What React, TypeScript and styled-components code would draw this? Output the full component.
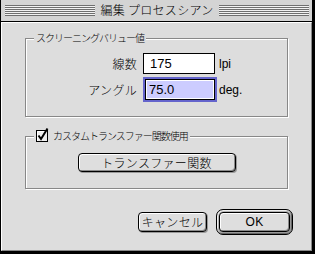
import React from "react";
import styled, { createGlobalStyle } from "styled-components";

const GlobalStyle = createGlobalStyle`
  html, body {
    margin: 0;
    padding: 0;
    background: #000;
  }
  body {
    font-family: "Noto Sans CJK JP", "Noto Sans", sans-serif;
    font-weight: 300;
    color: #000;
  }
`;

const Window = styled.div`
  width: 315px;
  height: 254px;
  box-sizing: border-box;
  display: flex;
  flex-direction: column;
  background: #dddddd;
  border-left: 1px solid #000;
  border-right: 3px solid #000;
  border-bottom: 3px solid #000;
`;

const TitleBar = styled.div`
  height: 22px;
  box-sizing: border-box;
  display: flex;
  align-items: center;
  padding: 0 3px 1px 4px;
  background: #d4d4d4;
  border-bottom: 1px solid #000;
`;

const Stripes = styled.div`
  flex: 1;
  height: 11px;
  background: repeating-linear-gradient(
    to bottom,
    #6f6f6f 0 1px,
    #f2f2f2 1px 2px
  );
`;

const Title = styled.div`
  padding: 0 5px;
  font-size: 12px;
  line-height: 14px;
  letter-spacing: 0.3px;
  white-space: nowrap;
`;

const Content = styled.div`
  flex: 1;
  display: flex;
  flex-direction: column;
  padding: 15px 23px 0 23px;
  border-top: 1px solid #fff;
  border-left: 1px solid #fff;
  border-right: 1px solid #888;
  border-bottom: 1px solid #888;
`;

const Group = styled.div<{ $top: number; $pad: number }>`
  position: relative;
  margin-top: ${(p) => p.$top}px;
  padding: ${(p) => p.$pad}px 0;
  border: 1px solid #888;
  box-shadow: inset 1px 1px 0 #fff, 1px 1px 0 #fff;
`;

const Legend = styled.div`
  position: absolute;
  top: -8px;
  left: 8px;
  display: flex;
  align-items: center;
  height: 14px;
  padding: 0 2px;
  background: #dddddd;
  font-size: 10px;
  letter-spacing: -1px;
  line-height: 14px;
  white-space: nowrap;
`;

const Rows = styled.div`
  display: grid;
  row-gap: 3px;
`;

const Row = styled.div<{ $h: number }>`
  display: flex;
  align-items: center;
  height: ${(p) => p.$h}px;
`;

const Label = styled.div`
  width: 111px;
  text-align: right;
  font-size: 12px;
  line-height: 14px;
  letter-spacing: 0.3px;
`;

const Field = styled.div<{ $focused?: boolean }>`
  box-sizing: border-box;
  width: ${(p) => (p.$focused ? 70 : 72)}px;
  height: 21px;
  margin-left: ${(p) => (p.$focused ? 8 : 6)}px;
  padding: ${(p) => (p.$focused ? "1px" : "0 0 0 6px")};
  border: 1px solid #000;
  background: #fff;
  outline: ${(p) => (p.$focused ? "2px solid #6464cc" : "none")};
  font-family: "Liberation Sans", Arial, sans-serif;
  font-weight: 400;
  font-size: 13px;
  line-height: 19px;
`;

const Selection = styled.div`
  height: 100%;
  padding-left: 2px;
  background: #ccccff;
  line-height: 17px;
`;

const Unit = styled.div`
  margin-left: 4px;
  font-family: "Liberation Sans", Arial, sans-serif;
  font-weight: 400;
  font-size: 12px;
`;

const CheckLabel = styled.span`
  margin-left: 3px;
`;

const Center = styled.div`
  display: flex;
  justify-content: center;
`;

const PushButton = styled.div<{ $w: number }>`
  box-sizing: border-box;
  width: ${(p) => p.$w}px;
  height: ${(p) => (p.$w > 100 ? 19 : 20)}px;
  display: flex;
  align-items: center;
  justify-content: center;
  border: 1px solid #000;
  border-radius: 4px;
  background: #dedede;
  box-shadow: inset 1px 1px 0 #fff, inset -1px -1px 0 #8a8a8a,
    1px 1px 0 #999;
  font-size: 12px;
  line-height: 14px;
  letter-spacing: 0.3px;
  white-space: nowrap;
`;

const ButtonRow = styled.div`
  display: flex;
  justify-content: flex-end;
  align-items: center;
  gap: 9px;
  margin: 20px -5px 0 0;
`;

const DefaultRing = styled.div`
  box-sizing: border-box;
  width: 77px;
  height: 26px;
  padding: 2px;
  border: 1px solid #000;
  border-radius: 7px;
  background: #b4b4b4;
  box-shadow: inset 1px 1px 0 #eee, inset -1px -1px 0 #666;
  display: flex;
  & > div {
    width: 100%;
    height: 100%;
    font-family: "Liberation Sans", Arial, sans-serif;
    font-weight: 400;
  }
`;

const CheckBox = () => (
  <svg width="14" height="14" viewBox="0 0 14 14" style={{ overflow: "visible" }}>
    <rect x="0.5" y="1.5" width="11" height="11" fill="#eee" stroke="#000" />
    <path d="M1.5 12 V2.5 H10.5" fill="none" stroke="#fff" />
    <polyline
      points="2.5,6.5 5,10 11.5,-0.5"
      fill="none"
      stroke="#000"
      strokeWidth="2"
    />
  </svg>
);

export default function App() {
  return (
    <>
      <GlobalStyle />
      <Window>
        <TitleBar>
          <Stripes />
          <Title>編集 プロセスシアン</Title>
          <Stripes />
        </TitleBar>
        <Content>
          <Group $top={0} $pad={14}>
            <Legend>スクリーニングバリュー値</Legend>
            <Rows>
              <Row $h={21}>
                <Label>線数</Label>
                <Field>175</Field>
                <Unit>lpi</Unit>
              </Row>
              <Row $h={25}>
                <Label>アングル</Label>
                <Field $focused>
                  <Selection>75.0</Selection>
                </Field>
                <Unit>deg.</Unit>
              </Row>
            </Rows>
          </Group>
          <Group $top={19} $pad={16}>
            <Legend>
              <CheckBox />
              <CheckLabel>カスタムトランスファー関数使用</CheckLabel>
            </Legend>
            <Center>
              <PushButton $w={158}>トランスファー関数</PushButton>
            </Center>
          </Group>
          <ButtonRow>
            <PushButton $w={69}>キャンセル</PushButton>
            <DefaultRing>
              <PushButton $w={69}>OK</PushButton>
            </DefaultRing>
          </ButtonRow>
        </Content>
      </Window>
    </>
  );
}
